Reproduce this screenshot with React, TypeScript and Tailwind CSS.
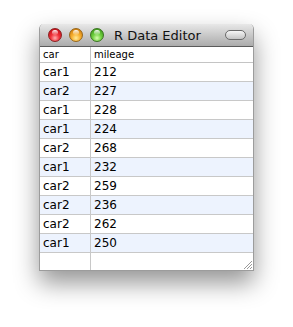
const rows = [
  ["car1", "212"],
  ["car2", "227"],
  ["car1", "228"],
  ["car1", "224"],
  ["car2", "268"],
  ["car1", "232"],
  ["car2", "259"],
  ["car2", "236"],
  ["car2", "262"],
  ["car1", "250"],
];

function Light({ tone }: { tone: "red" | "orange" | "green" }) {
  const fill =
    tone === "red"
      ? "bg-[radial-gradient(circle_at_50%_75%,#ffb0b0_0%,#f03038_40%,#b8000c_100%)] border-[#8a2020]"
      : tone === "orange"
        ? "bg-[radial-gradient(circle_at_50%_75%,#ffec9a_0%,#f8b030_40%,#c06a00_100%)] border-[#96661a]"
        : "bg-[radial-gradient(circle_at_50%_75%,#d8ffb0_0%,#70d040_40%,#308a10_100%)] border-[#3a7420]";
  return (
    <div className={`relative h-[14px] w-[14px] rounded-full border ${fill}`}>
      <div className="absolute left-[3px] top-[1px] h-[5px] w-[6px] rounded-full bg-gradient-to-b from-white/90 to-white/10" />
    </div>
  );
}

export default function App() {
  return (
    <div className="h-[327px] w-[293px] bg-white pl-[39px] pt-[24px] font-['DejaVu_Sans',sans-serif]">
      <div className="w-[215px] overflow-hidden rounded-t-[5px] border-x border-b border-[#9c9c9c] bg-white shadow-[0_12px_24px_rgba(0,0,0,0.42)]">
        {/* title bar */}
        <div className="flex h-[23px] items-center border-b border-[#5a5a5a] bg-gradient-to-b from-[#e8e8e8] to-[#ababab] pl-[8px] pr-[7px]">
          <div className="flex gap-[7px]">
            <Light tone="red" />
            <Light tone="orange" />
            <Light tone="green" />
          </div>
          <div className="ml-[10px] flex-1 text-[13px] leading-none text-[#111]">R Data Editor</div>
          <div className="h-[10px] w-[21px] rounded-full border border-[#6a6a6a] bg-gradient-to-b from-[#f6f6f6] to-[#c4c4c4]" />
        </div>

        {/* header */}
        <div className="flex h-[16px] border-b border-[#c4c4c4] text-[10px] leading-[15px] text-black">
          <div className="w-[51px] border-r border-[#c4c4c4] pl-[3px]">car</div>
          <div className="flex-1 pl-[3px]">mileage</div>
        </div>

        {rows.map(([car, mileage], i) => (
          <div
            key={i}
            className={`flex h-[19px] border-b border-[#c8c8c8] text-[12px] leading-[18px] text-black ${
              i % 2 === 1 ? "bg-[#edf3fe]" : "bg-white"
            }`}
          >
            <div className="w-[51px] border-r border-[#c8c8c8] pl-[3px]">{car}</div>
            <div className="flex-1 pl-[3px]">{mileage}</div>
          </div>
        ))}

        {/* empty row + resize grip */}
        <div className="relative flex h-[17px]">
          <div className="w-[51px] border-r border-[#c8c8c8]" />
          <svg className="absolute bottom-0 right-0" width="12" height="12" viewBox="0 0 12 12">
            <path d="M11 3 L3 11 M11 6 L6 11 M11 9 L9 11" stroke="#9a9a9a" strokeWidth="1" />
          </svg>
        </div>
      </div>
    </div>
  );
}
